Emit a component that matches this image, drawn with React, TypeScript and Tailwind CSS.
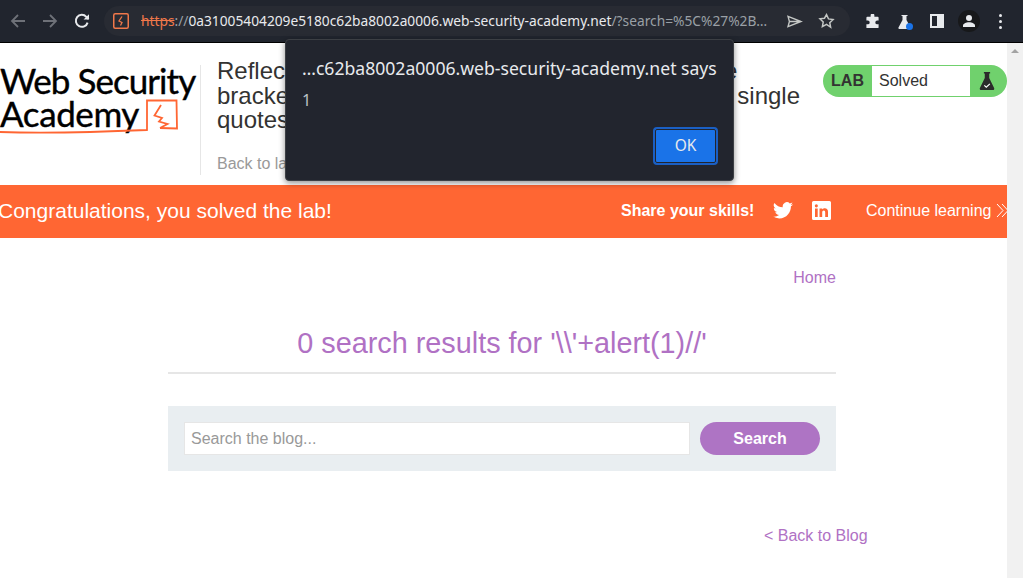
import React from "react";

const ui = "font-['Noto_Sans','Open_Sans',sans-serif]";
const web = "font-['Liberation_Sans',Arial,sans-serif]";

function Back() {
  return (
    <svg width="16" height="16" viewBox="0 0 16 16" fill="none" stroke="#6e7178" strokeWidth="1.8">
      <path d="M15 8H2M8 2 2 8l6 6" />
    </svg>
  );
}

function Forward() {
  return (
    <svg width="16" height="16" viewBox="0 0 16 16" fill="none" stroke="#6e7178" strokeWidth="1.8">
      <path d="M1 8h13M8 2l6 6-6 6" />
    </svg>
  );
}

function Reload() {
  return (
    <svg width="16" height="16" viewBox="0 0 16 16" fill="none" stroke="#e8eaed" strokeWidth="2">
      <path d="M13.6 9.6A6 6 0 1 1 12.3 3.8L14.6 6" />
      <path d="M15 1.2V6.6H9.6" fill="#e8eaed" stroke="none" />
    </svg>
  );
}

function Bolt({ size = 16 }: { size?: number }) {
  return (
    <svg width={size} height={size} viewBox="0 0 16 16" fill="none">
      <rect x="0.75" y="0.75" width="14.5" height="14.5" rx="1.5" stroke="#f0784a" strokeWidth="1.5" />
      <path d="M9 3.5 6 8l3 1.500L7.500 12.500" stroke="#f0784a" strokeWidth="1.3" />
    </svg>
  );
}

function Toolbar() {
  return (
    <div className={`flex h-[42px] items-center bg-[#21252e] ${ui}`}>
      <div className="ml-[10px] flex w-[80px] items-center gap-[16px]">
        <Back />
        <Forward />
        <Reload />
      </div>
      <div className="ml-[14px] flex h-[30px] w-[746px] items-center rounded-full bg-[#282b33] pl-[9px] pr-[15px]">
        <Bolt />
        <div className="ml-[12px] whitespace-nowrap text-[13.75px] leading-[18px] text-[#9aa0a6]">
          <span className="text-[#f0784a] line-through">https</span>://
          <span className="text-[#e8eaed]">0a31005404209e5180c62ba8002a0006.web-security-academy.net</span>
          /?search=%5C%27%2B…
        </div>
        <svg className="ml-auto" width="16" height="13" viewBox="0 0 17 14" fill="none" stroke="#c4c7c5" strokeWidth="1.500">
          <path d="M1 1.500 15 7 1 12.500l1.500-5.500L1 1.500ZM2.500 7H15" />
        </svg>
        <svg className="ml-[15px]" width="17" height="16" viewBox="0 0 24 24" fill="none" stroke="#c4c7c5" strokeWidth="2.200">
          <path d="m12 2.500 3 6.300 6.900.9-5 4.800 1.300 6.900L12 17.200l-6.200 3.200 1.300-6.900-5-4.800 6.900-.9z" />
        </svg>
      </div>
      <div className="ml-[15px] flex items-center">
        <svg width="15" height="15" viewBox="0 0 16 16" fill="#e8eaed">
          <path d="M6 1.500a2 2 0 0 1 4 0V3h3.500a1 1 0 0 1 1 1v3H13a2 2 0 0 0 0 4h1.500v3a1 1 0 0 1-1 1H1.500V11H3a2 2 0 0 0 0-4H1.500V4a1 1 0 0 1 1-1H6z" />
        </svg>
        <div className="relative ml-[17px] h-[15px] w-[15px]">
          <svg width="15" height="15" viewBox="0 0 15 15" fill="#e8eaed">
            <path d="M4.500 1h6v1h-1v4l4 7.500a1 1 0 0 1-1 1.500H2.500a1 1 0 0 1-1-1.500l4-7.500V2h-1z" />
          </svg>
          <span className="absolute bottom-[-1px] right-[-1px] h-[7px] w-[7px] rounded-full bg-[#1a73e8]" />
        </div>
        <div className="ml-[18px] flex h-[14px] w-[14px] justify-end border-[2px] border-[#e8eaed]">
          <div className="h-full w-[5px] bg-[#e8eaed]" />
        </div>
        <div className="ml-[14px] flex h-[22px] w-[22px] items-center justify-center rounded-full bg-[#17181a]">
          <svg width="14" height="14" viewBox="0 0 14 14" fill="#e8eaed">
            <circle cx="7" cy="4" r="3" />
            <path d="M1 13v-1.500C1 9.500 4 8.200 7 8.200s6 1.300 6 3.300V13z" />
          </svg>
        </div>
        <div className="ml-[19px] flex flex-col gap-[3px]">
          <span className="h-[3px] w-[3px] rounded-full bg-[#e8eaed]" />
          <span className="h-[3px] w-[3px] rounded-full bg-[#e8eaed]" />
          <span className="h-[3px] w-[3px] rounded-full bg-[#e8eaed]" />
        </div>
      </div>
    </div>
  );
}

function Logo() {
  return (
    <div className="relative h-[100px] w-[200px] shrink-0 whitespace-nowrap pt-[21px] font-['Lato',sans-serif] text-[35px] font-normal leading-[33px] tracking-[-0.95px] text-black [-webkit-text-stroke:0.4px_black]">
      <div>Web Security</div>
      <div className="tracking-[-0.4px]">Academy</div>
      <svg className="absolute left-0 top-0" width="200" height="100" viewBox="0 43 200 100" fill="none" stroke="#ff6633" strokeWidth="1.800">
        <path d="M0 132C50 133.500 100 132 147 130V100.500H176.500L177 128.500L160 128" />
        <path d="M161 105 154.500 115.500 162 118 159 121.500 167.500 124 160 128" strokeWidth="1.800" />
      </svg>
    </div>
  );
}

function Header() {
  return (
    <header className="flex h-[142px] items-start bg-white">
      <Logo />
      <div className="mt-[22px] h-[110px] w-[1px] shrink-0 bg-[#e6e6e6]" />
      <div className="ml-[16px] mt-[16px] w-[590px] shrink-0 text-[#333332]">
        <h2 className="text-[24px] leading-[24.500px]">
          Reflected XSS into a JavaScript string with angle brackets and double quotes HTML-encoded and single quotes escaped
        </h2>
        <div className="mt-[21px] text-[16px] leading-[20px] text-[#999999]">Back to lab description »</div>
      </div>
      <div className="ml-[16px] mt-[22px] flex h-[32px] w-[184px] shrink-0 overflow-hidden rounded-full bg-[#70d16d]">
        <div className="flex w-[49px] items-center justify-center text-[16px] font-bold text-[#333332]">LAB</div>
        <div className="my-[1px] flex w-[98px] items-center bg-white pl-[7px] text-[16px] text-[#333332]">Solved</div>
        <div className="flex flex-1 items-center justify-center pr-[3px]">
          <svg width="16" height="20" viewBox="0 0 18 22" fill="#2b2b2b">
            <path d="M5.500 1h7v1.500h-1v5L17 19a1.500 1.500 0 0 1-1.400 2.200H2.400A1.500 1.500 0 0 1 1 19L6.500 7.500v-5h-1z" />
            <path d="m6 16 2.200 2 4-3.800" fill="none" stroke="#fff" strokeWidth="1.300" />
          </svg>
        </div>
      </div>
    </header>
  );
}

function Banner() {
  return (
    <div className="flex h-[53px] items-center overflow-hidden whitespace-nowrap bg-[#ff6633] pb-[2px] text-white">
      <div className="ml-[-2px] w-[623px] shrink-0 text-[21px]">Congratulations, you solved the lab!</div>
      <div className="w-[133px] shrink-0 text-[16px] font-bold">Share your skills!</div>
      <svg className="ml-[19px] shrink-0" width="20" height="17" viewBox="0 0 24 20" fill="#fff">
        <path d="M24 2.400a9.800 9.800 0 0 1-2.800.8A5 5 0 0 0 23.300.500a9.800 9.800 0 0 1-3.100 1.200 4.900 4.900 0 0 0-8.400 4.500A14 14 0 0 1 1.700.900a4.900 4.900 0 0 0 1.500 6.600 4.900 4.900 0 0 1-2.200-.6v.1a4.900 4.900 0 0 0 3.900 4.800 4.900 4.900 0 0 1-2.200.1 4.900 4.900 0 0 0 4.600 3.400A9.900 9.900 0 0 1 0 17.300 14 14 0 0 0 7.500 19.500c9.100 0 14-7.500 14-14v-.6A10 10 0 0 0 24 2.400z" />
      </svg>
      <svg className="ml-[19px] shrink-0" width="19" height="19" viewBox="0 0 19 19">
        <path fill="#fff" fillRule="evenodd" d="M1.500 0h16A1.500 1.500 0 0 1 19 1.500v16a1.500 1.500 0 0 1-1.500 1.500h-16A1.500 1.500 0 0 1 0 17.500v-16A1.500 1.500 0 0 1 1.500 0ZM3 7.500V16h2.700V7.500H3Zm1.350-4.200a1.550 1.550 0 1 0 0 3.100 1.550 1.550 0 0 0 0-3.100ZM7.500 7.500V16h2.700v-4.500c0-1.200.5-2 1.600-2s1.400.8 1.400 2V16H16v-5c0-2.400-1.200-3.700-3.200-3.700-1.300 0-2.200.6-2.600 1.300V7.500H7.500Z" />
      </svg>
      <div className="ml-[35px] shrink-0 text-[16px]">Continue learning</div>
      <svg className="ml-[5px] shrink-0" width="12" height="15" viewBox="0 0 12 15" fill="none" stroke="#fff" strokeWidth="1">
        <path d="m1 1 6 6.500L1 14M6 1l6 6.500L6 14" />
      </svg>
    </div>
  );
}

function Main() {
  return (
    <main className="bg-white text-[#b071c4]">
      <div className="ml-[168px] w-[668px]">
        <div className="pt-[30px] text-right text-[16px] leading-[20px]">Home</div>
        <h1 className="mt-[38px] border-b-[2px] border-[#e6e6e6] pb-[12px] text-center text-[28.800px] leading-[34px]">
          0 search results for '\\'+alert(1)//'
        </h1>
        <div className="mt-[32px] flex h-[65px] items-center bg-[#e9eef1] pl-[16px]">
          <div className="flex h-[33px] w-[506px] items-center border border-[#e6e6e6] bg-white pl-[6px] text-[16px] text-[#999999]">
            Search the blog...
          </div>
          <div className="ml-[10px] flex h-[33px] w-[120px] items-center justify-center rounded-full bg-[#ae74c4] text-[16px] font-bold text-white">
            Search
          </div>
        </div>
      </div>
      <div className="mt-[55px] pl-[764px] text-[16px] leading-[20px]">&lt; Back to Blog</div>
    </main>
  );
}

function Scrollbar() {
  return (
    <div className="flex w-[16px] shrink-0 flex-col items-center bg-[#f1f1f1] pt-[6px]">
      <div className="h-0 w-0 border-x-[4px] border-b-[4px] border-x-transparent border-b-[#a3a3a3]" />
    </div>
  );
}

function Dialog() {
  return (
    <div className={`absolute left-[285px] top-[39px] h-[142px] w-[449px] rounded-[4px] border border-[#3c3f44] bg-[#22252e] shadow-[0_2px_6px_rgba(0,0,0,0.45)] ${ui}`}>
      <div className="whitespace-nowrap pl-[16px] pt-[16px] text-[17.600px] leading-[24px] text-[#e8eaed]">…c62ba8002a0006.web-security-academy.net says</div>
      <div className="pl-[16px] pt-[10px] text-[16px] leading-[20px] text-[#bdc1c6]">1</div>
      <div className="absolute left-[367px] top-[87px] flex h-[38px] w-[65px] items-center justify-center rounded-[4px] border-[2px] border-[#1a5fc4] bg-[#1a73e8] text-[15.500px] text-[#e8eaed] outline outline-1 -outline-offset-3 outline-[#22252e]">
        OK
      </div>
    </div>
  );
}

export default function App() {
  return (
    <div className={`relative h-[578px] w-[1023px] overflow-hidden bg-white ${web}`}>
      <Toolbar />
      <div className="h-[1px] bg-black" />
      <div className="flex h-[535px]">
        <div className="w-[1007px] shrink-0">
          <Header />
          <Banner />
          <Main />
        </div>
        <Scrollbar />
      </div>
      <Dialog />
    </div>
  );
}
